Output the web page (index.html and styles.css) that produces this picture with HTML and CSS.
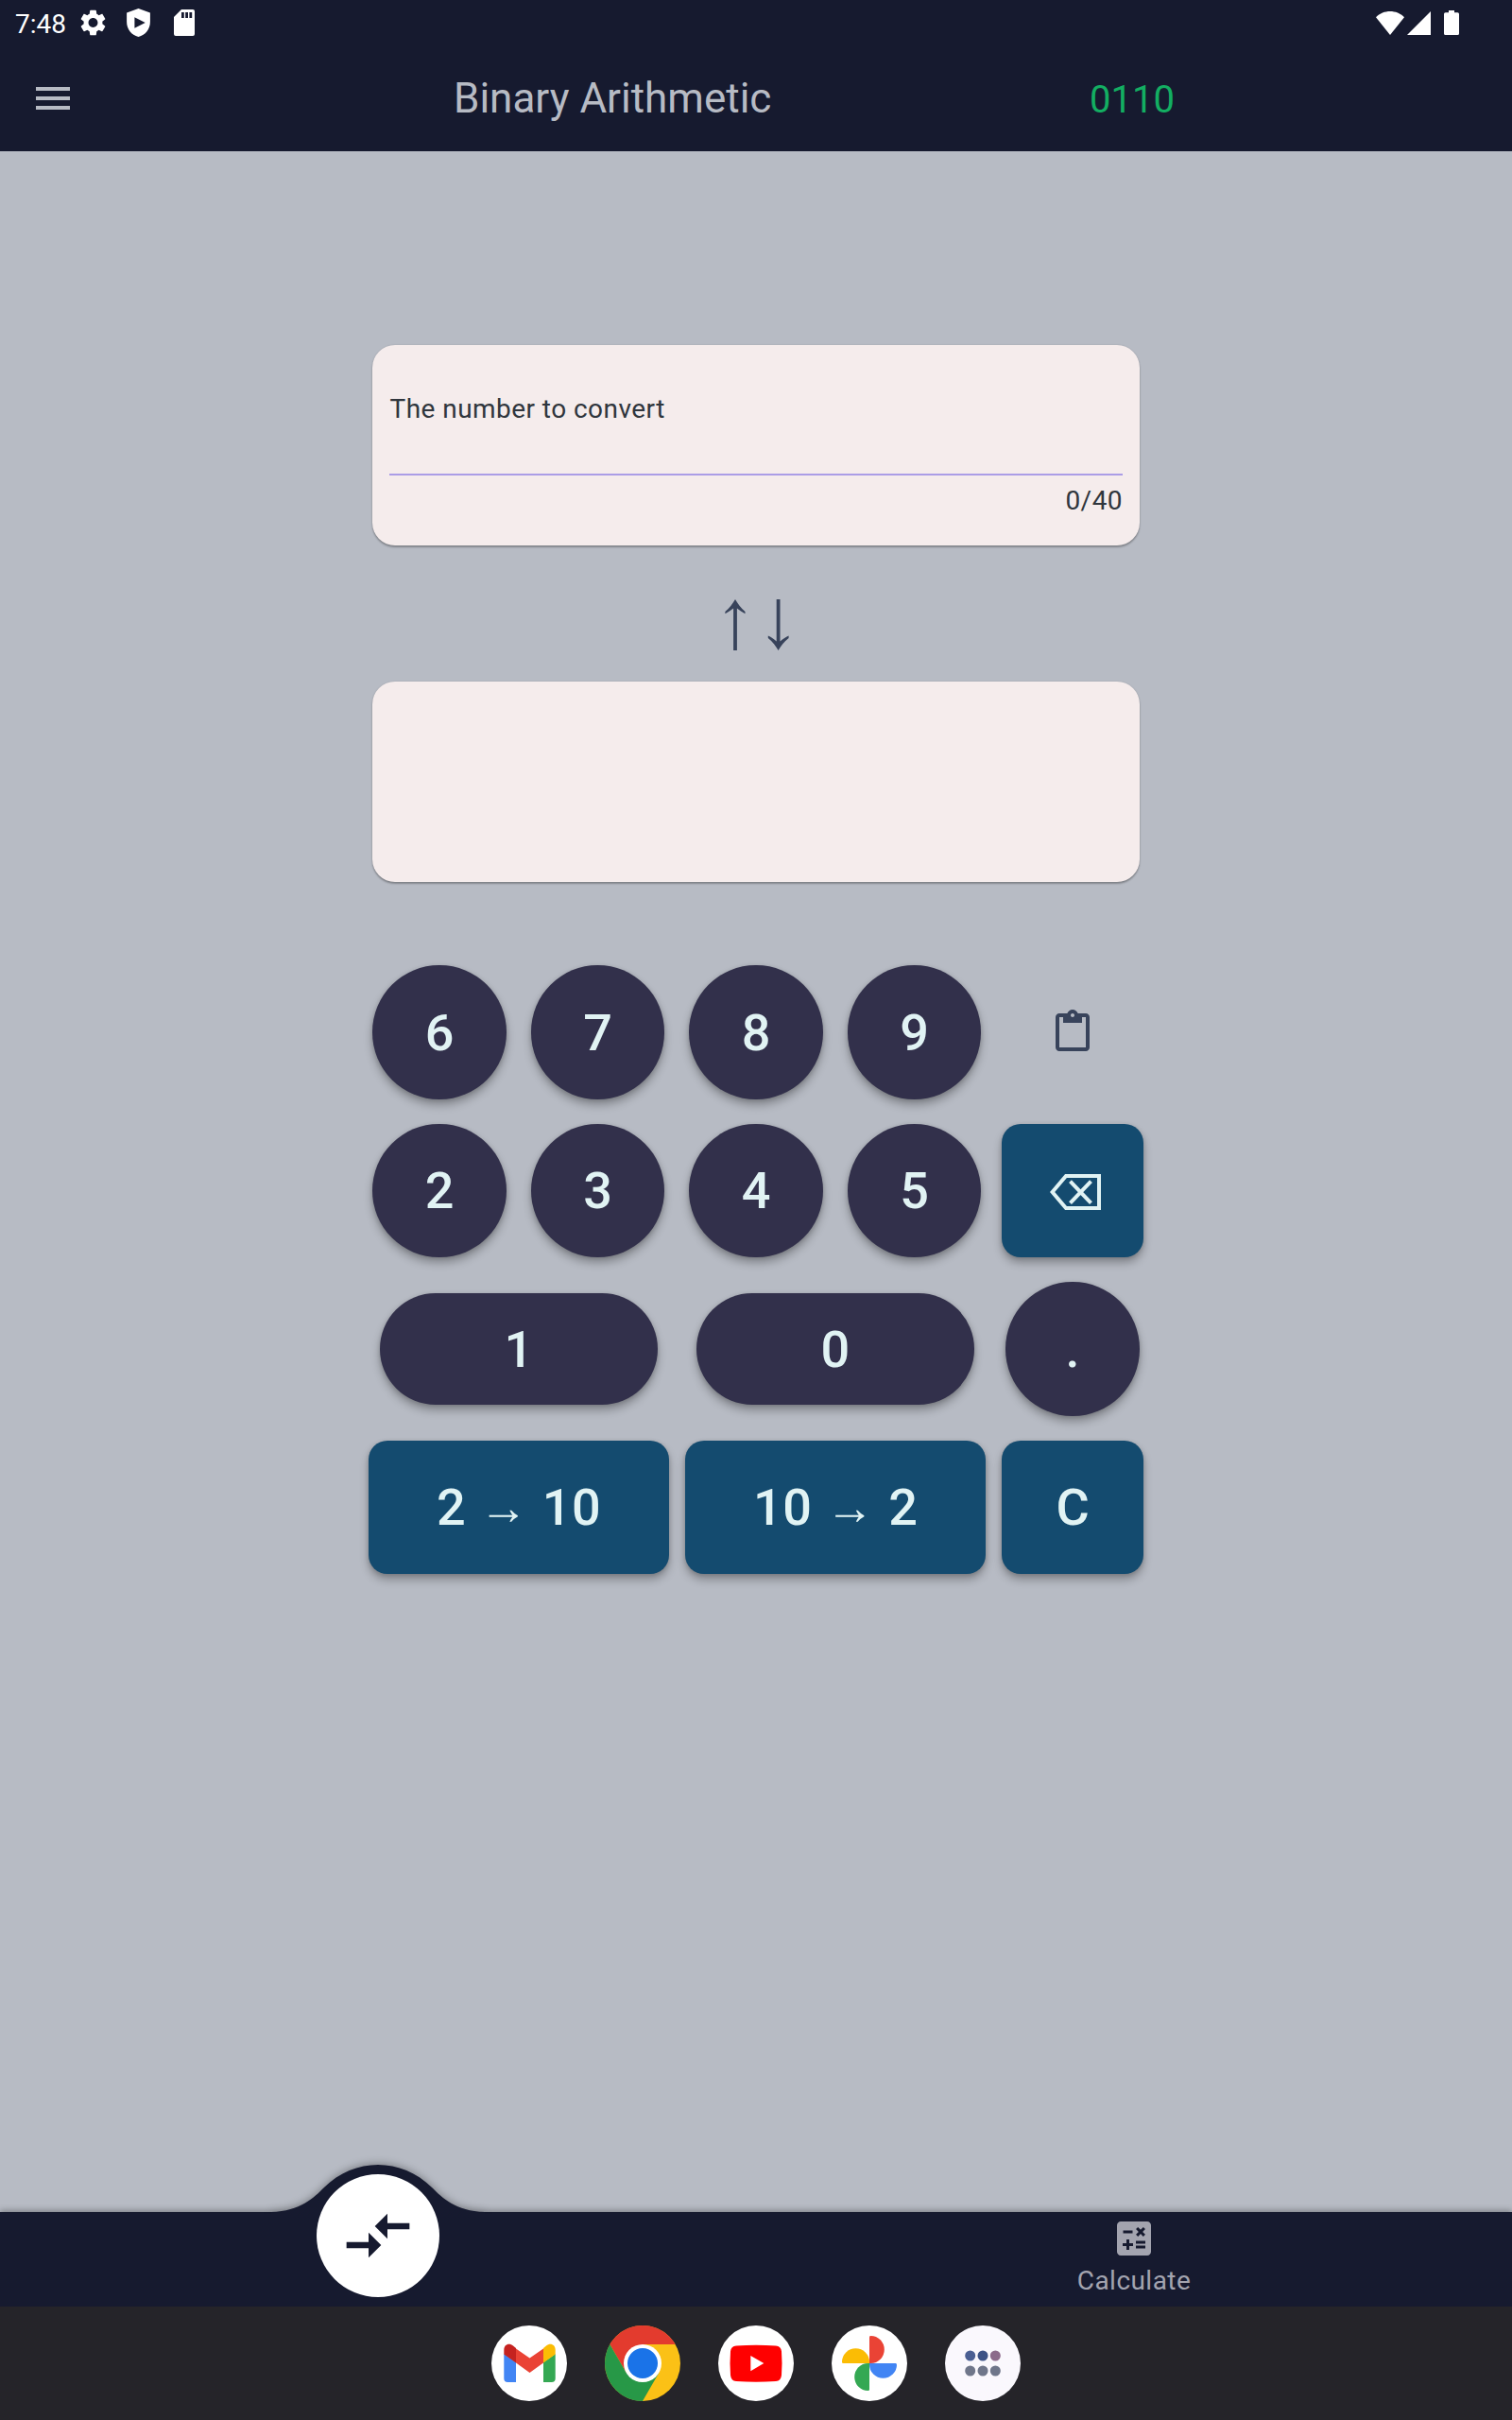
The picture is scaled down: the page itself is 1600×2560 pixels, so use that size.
FILE: index.html
```html
<!DOCTYPE html>
<html lang="en">
<head>
<meta charset="utf-8">
<title>Binary Arithmetic</title>
<link rel="stylesheet" href="styles.css">
</head>
<body>
<div class="screen">
  <div class="status-bar">
    <span class="clock">7:48</span>
    <svg class="status-icon gear" viewBox="0 0 24 24"><path d="M19.14 12.94c.04-.3.06-.61.06-.94 0-.32-.02-.64-.07-.94l2.03-1.58c.18-.14.23-.41.12-.61l-1.92-3.32c-.12-.22-.37-.29-.59-.22l-2.39.96c-.5-.38-1.03-.7-1.62-.94l-.36-2.54c-.04-.24-.24-.41-.48-.41h-3.84c-.24 0-.43.17-.47.41l-.36 2.54c-.59.24-1.13.57-1.62.94l-2.39-.96c-.22-.08-.47 0-.59.22L2.74 8.87c-.12.21-.08.47.12.61l2.03 1.58c-.05.3-.09.63-.09.94s.02.64.07.94l-2.03 1.58c-.18.14-.23.41-.12.61l1.92 3.32c.12.22.37.29.59.22l2.39-.96c.5.38 1.03.7 1.62.94l.36 2.54c.05.24.24.41.48.41h3.84c.24 0 .44-.17.47-.41l.36-2.54c.59-.24 1.13-.56 1.62-.94l2.39.96c.22.08.47 0 .59-.22l1.92-3.32c.12-.22.07-.47-.12-.61l-2.01-1.58zM12 15.6c-1.98 0-3.6-1.62-3.6-3.6s1.62-3.6 3.6-3.6 3.6 1.62 3.6 3.6-1.62 3.6-3.6 3.6z"/></svg>
    <svg class="status-icon shield" viewBox="0 0 25 30"><path fill-rule="evenodd" d="M12.500 0 24.900 4.600V14C24.900 22 20 28 12.500 30 5 28 .1 22 .1 14V4.600zM8.400 9.200v11.600L19.700 15z"/></svg>
    <svg class="status-icon sd" viewBox="0 0 22 28"><path fill-rule="evenodd" d="M8 0h12a2 2 0 0 1 2 2v24a2 2 0 0 1-2 2H2a2 2 0 0 1-2-2V8zM8 3v6h2.800V3zM12.200 3v6H15V3zM16.400 3v6h2.800V3z"/></svg>
    <svg class="status-icon wifi" viewBox="0 0 30 25"><path d="M0 6.200C4 2 9.500 0 15 0s11 2 15 6.200L15 25z"/></svg>
    <svg class="status-icon signal" viewBox="0 0 25 25"><path d="M25 0v25H0z"/></svg>
    <svg class="status-icon battery" viewBox="0 0 16 26"><path d="M5 0h6v2.200h3.400A1.600 1.600 0 0 1 16 3.800v20.600a1.600 1.600 0 0 1-1.600 1.600H1.600A1.600 1.600 0 0 1 0 24.400V3.800a1.600 1.600 0 0 1 1.600-1.600H5z"/></svg>
  </div>

  <header class="app-bar">
    <svg class="menu" viewBox="0 0 24 24"><path d="M3 18h18v-2H3v2zm0-5h18v-2H3v2zm0-7v2h18V6H3z"/></svg>
    <h1 class="title">Binary Arithmetic</h1>
    <span class="bits">0110</span>
  </header>

  <main class="content">
    <section class="card">
      <div class="label">The number to convert</div>
      <div class="counter">0/40</div>
    </section>
    <svg class="swap" viewBox="0 0 68 54">
      <path d="M11 0C13.500 4.500 17 9 21.500 13v2.200C18.300 13.500 15.500 11.600 12.900 9.500V54H9.100V9.500C6.500 11.600 3.500 13.500.4 15.200V13C5 9 8.500 4.500 11 0z"/>
      <path d="M56.600 54C54.100 49.500 50.500 45 45.800 41v-2.400C49.500 40.300 52 42.400 54.700 44.500V0h3.800v44.500c2.700-2.100 5.700-4.200 9.100-5.900V41C62.800 45 59.100 49.500 56.600 54z"/>
    </svg>
    <section class="card"></section>

    <div class="keypad">
      <button class="key round">6</button>
      <button class="key round">7</button>
      <button class="key round">8</button>
      <button class="key round">9</button>
      <button class="paste"><svg viewBox="0 0 24 24"><path d="M19 2h-4.180C14.400.84 13.300 0 12 0S9.600.84 9.180 2H5c-1.100 0-2 .9-2 2v16c0 1.100.9 2 2 2h14c1.100 0 2-.9 2-2V4c0-1.100-.9-2-2-2zm-7 0c.55 0 1 .45 1 1s-.45 1-1 1-1-.45-1-1 .45-1 1-1zm7 18H5V4h2v3h10V4h2v16z"/></svg></button>
      <button class="key round">2</button>
      <button class="key round">3</button>
      <button class="key round">4</button>
      <button class="key round">5</button>
      <button class="key square"><svg class="backspace" viewBox="0 0 54 38"><path d="M17 2h35v34H17L2.600 19zM21.500 7.700l22 23M43.500 7.700l-22 23"/></svg></button>
      <button class="key pill">1</button>
      <button class="key pill">0</button>
      <button class="key round">.</button>
      <button class="key wide">2 <span class="arrow">→</span> 10</button>
      <button class="key wide">10 <span class="arrow">→</span> 2</button>
      <button class="key square">C</button>
    </div>
  </main>

  <nav class="tabs">
    <svg class="bump" viewBox="0 0 230 52"><path d="M2 50C33 49 47 35 58 24 90-8 140-8 172 24 183 35 197 49 228 50V52H2z"/></svg>
    <div class="tab">
      <div class="tab-active"><svg viewBox="0 0 24 24"><path d="M9.010 14H2v2h7.010v3L13 15l-3.990-4v3zm5.980-1v-3H22V8h-7.010V5L11 9l3.990 4z"/></svg></div>
    </div>
    <div class="tab calculate">
      <svg viewBox="0 0 24 24"><path d="M19 3H5c-1.100 0-2 .9-2 2v14c0 1.100.9 2 2 2h14c1.100 0 2-.9 2-2V5c0-1.100-.9-2-2-2zm-5.970 4.060L14.090 6l1.410 1.410L16.910 6l1.060 1.060-1.410 1.410 1.410 1.410-1.060 1.060-1.410-1.400-1.410 1.410-1.060-1.060 1.410-1.410-1.410-1.420zm-6.780.66h5v1.500h-5v-1.500zM11.500 16h-2v2H8v-2H6v-1.500h2v-2h1.500v2h2V16zm6.500 1.250h-5v-1.500h5v1.500zm0-2.500h-5v-1.500h5v1.500z"/></svg>
      <span>Calculate</span>
    </div>
  </nav>

  <footer class="dock">
    <svg viewBox="0 0 80 80">
      <circle cx="40" cy="40" r="40" fill="#fff"/>
      <path d="M13.300 30v26a4 4 0 0 0 4 4h8.700V39z" fill="#4285f4"/>
      <path d="M67.700 30v26a4 4 0 0 1-4 4H55V39z" fill="#34a853"/>
      <path d="M26 24.500v15L40.500 50 55 39.500v-15L40.500 34.500z" fill="#ea4335"/>
      <path d="M13.300 30.500v-4.500c0-6 5.500-8 9.700-4.500l3 2.500v15.500z" fill="#c5221f"/>
      <path d="M67.700 30.500v-4.500c0-6-5.500-8-9.700-4.500l-3 2.500v15.500z" fill="#fbbc04"/>
    </svg>
    <svg viewBox="0 0 80 80">
      <circle cx="40" cy="40" r="40" fill="#fbc116"/>
      <path d="M40 40 22.700 50 5.360 20A40 40 0 0 1 74.640 20H40z" fill="#e33b2e"/>
      <path d="M5.360 20 22.700 50 40 40 57.320 50 40 80A40 40 0 0 1 5.360 20z" fill="#279847"/>
      <circle cx="40" cy="40" r="20" fill="#fff"/>
      <circle cx="40" cy="40" r="16" fill="#1a73e8"/>
    </svg>
    <svg viewBox="0 0 80 80">
      <circle cx="40" cy="40" r="40" fill="#fff"/>
      <path d="M19 21.600Q40 19.800 61 21.600 66.500 22 67 27.500 68 40 67 52.500 66.500 58.500 61 59 40 60.500 19 59 13.500 58.500 13 52.500 12 40 13 27.500 13.500 22 19 21.600z" fill="red"/>
      <path d="M34.300 32v16.200L48.300 40z" fill="#fff"/>
    </svg>
    <svg viewBox="0 0 80 80">
      <circle cx="40" cy="40" r="40" fill="#fff"/>
      <path d="M40 40V12.300Q40 11 41.500 11A14.300 14.500 0 0 1 41.500 40z" fill="#ea4335"/>
      <path d="M40 40h27.700Q69 40 69 41.500A14.500 14.300 0 0 1 40 41.500z" fill="#4285f4"/>
      <path d="M40 40v27.700Q40 69 38.500 69A14.300 14.500 0 0 1 38.500 40z" fill="#34a853"/>
      <path d="M40 40H12.300Q11 40 11 38.500A14.500 14.300 0 0 1 40 38.500z" fill="#fbbc04"/>
    </svg>
    <svg viewBox="0 0 80 80">
      <circle cx="40" cy="40" r="40" fill="#faf8fd"/>
      <circle cx="26.700" cy="32" r="5.500" fill="#4a5f93"/>
      <circle cx="40" cy="32" r="5.500" fill="#3c5285"/>
      <circle cx="53.300" cy="32" r="5.500" fill="#8c6b8b"/>
      <g fill="#6f768a"><circle cx="26.700" cy="48" r="5.500"/><circle cx="40" cy="48" r="5.500"/><circle cx="53.300" cy="48" r="5.500"/></g>
    </svg>
  </footer>
</div>
</body>
</html>
```
FILE: styles.css
```css
* { box-sizing: border-box; }

body {
  margin: 0;
  font-family: Roboto, "Liberation Sans", sans-serif;
  background: #b7bbc4;
}

svg { display: block; flex: none; }

.screen {
  width: 1600px;
  height: 2560px;
  display: flex;
  flex-direction: column;
  overflow: hidden;
}

/* System status bar */
.status-bar {
  height: 48px;
  display: flex;
  align-items: center;
  padding: 0 56px 0 16px;
  background: #161a2f;
  color: #fff;
}
.clock { font-size: 28px; line-height: 48px; width: 66px; padding-top: 3px; }
.status-icon { fill: currentColor; }
.gear { width: 33px; height: 34px; }
.shield { width: 25px; height: 30px; margin-left: 19px; }
.sd { width: 22px; height: 28px; margin-left: 25px; }
.wifi { width: 30px; height: 25px; margin-left: auto; }
.signal { width: 25px; height: 25px; margin-left: 3px; }
.battery { width: 16px; height: 26px; margin-left: 14px; }

/* Application bar */
.app-bar {
  height: 112px;
  display: flex;
  align-items: center;
  padding-left: 32px;
  background: #161a2f;
}
.menu { width: 48px; height: 48px; fill: #b7bbc4; }
.title {
  margin: 0 0 0 400px;
  padding-bottom: 1px;
  width: 673px;
  font-size: 44px;
  font-weight: 400;
  line-height: 52px;
  color: #b7bbc4;
}
.bits { font-size: 40px; line-height: 46px; padding-top: 3px; color: #13ae62; }

/* Conversion area */
.content {
  flex: 1;
  display: flex;
  flex-direction: column;
  align-items: center;
  padding-top: 205px;
}
.card {
  width: 812px;
  height: 212px;
  padding: 0 18px;
  border-radius: 24px;
  background: #f5ecec;
  box-shadow: 0 2px 2px rgba(0, 0, 0, .28), 0 0 2px rgba(0, 0, 0, .12);
  font-size: 28px;
  letter-spacing: .45px;
  color: #30363d;
}
.label {
  height: 138px;
  padding: 52px 0 0 .5px;
  line-height: 32px;
  border-bottom: 2px solid #ab9de6;
}
.counter { padding-top: 11px; line-height: 32px; text-align: right; }
.swap { width: 68px; height: 54px; margin: 57px 0 33px 1px; fill: #38435b; }

/* Keypad */
.keypad {
  display: grid;
  grid-template-columns: repeat(5, 167.5px);
  grid-auto-rows: 167.5px;
  place-items: center;
  margin-top: 75px;
}
.key, .paste { border: 0; padding: 0; background: none; }
.key {
  display: flex;
  align-items: center;
  justify-content: center;
  height: 141.5px;
  padding: 2px 0 0 1px;
  font: 500 54px/64px Roboto, "Liberation Sans", sans-serif;
  letter-spacing: .8px;
  white-space: pre;
  color: #e1f3f4;
  background: #144b6f;
  box-shadow: 0 6px 10px rgba(0, 0, 0, .28), 0 1px 4px rgba(0, 0, 0, .15);
}
.round { width: 141.500px; border-radius: 50%; background: #32304b; }
.square { width: 150px; border-radius: 20px; }
.wide { grid-column: span 2; width: 318px; border-radius: 20px; }
.pill {
  grid-column: span 2;
  width: 294px;
  height: 117.500px;
  border-radius: 59px;
  background: #32304b;
}
.arrow { font-family: "Liberation Sans"; font-size: 51px; font-weight: 400; }
.paste svg { width: 48px; height: 48px; fill: #38435b; }
.backspace {
  width: 54px;
  height: 38px;
  margin: 1px 0 0 5px;
  fill: none;
  stroke: #e1f3f4;
  stroke-width: 4;
}

/* Bottom navigation */
.tabs {
  position: relative;
  height: 100px;
  display: grid;
  grid-template-columns: 1fr 1fr;
  background: #161a2f;
  box-shadow: 0 -2px 6px rgba(0, 0, 0, .3);
}
.bump {
  position: absolute;
  left: 285px;
  top: -50px;
  width: 230px;
  height: 52px;
  overflow: visible;
  fill: #161a2f;
  filter: drop-shadow(0 -1px 4px rgba(0, 0, 0, .35));
  clip-path: inset(-20px -20px 0 -20px);
}
.tab { display: flex; flex-direction: column; align-items: center; }
.tab-active {
  position: relative;
  width: 130px;
  height: 130px;
  margin-top: -40px;
  display: flex;
  align-items: center;
  justify-content: center;
  border-radius: 50%;
  background: #fff;
}
.tab-active svg { width: 80px; height: 80px; fill: #161a2f; }
.calculate { padding-top: 4px; color: #a3a4af; font-size: 28px; line-height: 32px; letter-spacing: .45px; }
.calculate svg { width: 48px; height: 48px; fill: currentColor; }
.calculate span { padding-top: 5px; }

/* System dock */
.dock {
  position: relative;
  height: 120px;
  display: flex;
  align-items: center;
  justify-content: center;
  gap: 40px;
  background: #252429;
}
.dock svg { width: 80px; height: 80px; }
```
